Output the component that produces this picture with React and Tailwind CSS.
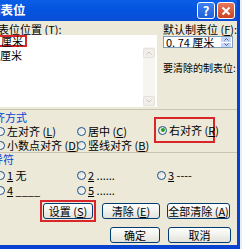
import React from "react";

const U = ({ c }) => <span className="underline">{c}</span>;

const Radio = ({ on }) => (
  <span className="shrink-0 w-[9px] h-[9px] rounded-full border border-[#1C5180] bg-gradient-to-br from-[#DCDCD7] to-white flex items-center justify-center">
    {on && <span className="w-[4px] h-[4px] rounded-full bg-[#21A121]" />}
  </span>
);

const Btn = ({ children, w, className = "" }) => (
  <div
    className={`h-[16px] shrink-0 ${w} rounded-[3px] border border-[#003C74] bg-gradient-to-b from-white to-[#E3E3DB] flex items-center justify-center whitespace-nowrap ${className}`}
  >
    {children}
  </div>
);

const Opt = ({ w, ml = "", on, children }) => (
  <div className={`${w} ${ml} shrink-0 h-[12px] flex items-center gap-[2px] whitespace-nowrap`}>
    <Radio on={on} />
    <span>{children}</span>
  </div>
);

export default function App() {
  return (
    <div
      className="w-[242px] h-[249px] overflow-hidden flex bg-[#ECE9D8] text-black"
      style={{ fontFamily: '"Noto Sans CJK SC", "Noto Sans", sans-serif' }}
    >
      <div className="w-[237px] shrink-0 flex flex-col">
        {/* title bar */}
        <div className="h-[21px] shrink-0 bg-gradient-to-b from-[#0A5FE6] via-[#0353DF] to-[#0A4FD6] flex items-center">
          <span className="ml-[-12px] text-white font-bold text-[12.5px] leading-none whitespace-nowrap">制表位</span>
          <div className="ml-auto flex gap-[2px] mr-[2px]">
            <div className="w-[18px] h-[17px] rounded-[3px] border border-white bg-gradient-to-b from-[#3C81F3] to-[#1F5FD8] flex items-center justify-center text-white font-bold text-[13px] leading-none">?</div>
            <div className="w-[18px] h-[17px] rounded-[3px] border border-white bg-gradient-to-b from-[#E8785C] to-[#C9421F] flex items-center justify-center">
              <svg width="10" height="10" viewBox="0 0 10 10">
                <path d="M1.5 1.5 L8.5 8.5 M8.5 1.5 L1.5 8.5" stroke="white" strokeWidth="2" />
              </svg>
            </div>
          </div>
        </div>

        {/* body */}
        <div className="flex-1 flex flex-col text-[11px] leading-none">
          <div className="flex pt-[3px]">
            {/* left column */}
            <div className="w-[157px] shrink-0 flex flex-col">
              <div className="h-[11px] ml-[-13px] whitespace-nowrap">制表位位置 (<U c="T" />):</div>
              <div className="h-[12px] bg-white flex items-center">
                <div className="ml-[-3px] h-[12px] pl-[2px] pr-[2px] border-2 border-[#D8262B] flex items-center whitespace-nowrap">厘米</div>
              </div>
              <div className="h-[60px] bg-white flex">
                <div className="flex-1 pt-[3px]">厘米</div>
                <div className="w-[12px] mr-[2px] flex flex-col justify-between bg-[#F6F5EF] py-[1px]">
                  <div className="h-[10px] border border-[#E4E2DA] rounded-[2px] bg-[#F0EFEA] flex items-center justify-center">
                    <svg width="6" height="4" viewBox="0 0 6 4"><path d="M0.5 3.5 L3 1 L5.5 3.5" stroke="#C9C7BA" fill="none" /></svg>
                  </div>
                  <div className="h-[10px] border border-[#E4E2DA] rounded-[2px] bg-[#F0EFEA] flex items-center justify-center">
                    <svg width="6" height="4" viewBox="0 0 6 4"><path d="M0.5 0.5 L3 3 L5.5 0.5" stroke="#C9C7BA" fill="none" /></svg>
                  </div>
                </div>
              </div>
            </div>
            {/* right column */}
            <div className="ml-[6px] flex flex-col">
              <div className="h-[11px] whitespace-nowrap">默认制表位 (<U c="F" />):</div>
              <div className="mt-[1px] w-[70px] h-[12px] bg-white border border-[#7F9DB9] flex items-center">
                <span className="pl-[2px] flex-1 whitespace-nowrap">0. 74 厘米</span>
                <div className="w-[10px] h-[10px] flex flex-col gap-px mr-px">
                  <div className="flex-1 bg-[#C5D5FB] flex items-center justify-center">
                    <svg width="5" height="3" viewBox="0 0 5 3"><path d="M0.5 2.5 L2.5 0.5 L4.5 2.5" stroke="#4D6185" fill="none" /></svg>
                  </div>
                  <div className="flex-1 bg-[#C5D5FB] flex items-center justify-center">
                    <svg width="5" height="3" viewBox="0 0 5 3"><path d="M0.5 0.5 L2.5 2.5 L4.5 0.5" stroke="#4D6185" fill="none" /></svg>
                  </div>
                </div>
              </div>
              <div className="mt-[15px] text-[10px] whitespace-nowrap">要清除的制表位:</div>
            </div>
          </div>

          {/* alignment section */}
          <div className="mt-[2px] h-px bg-[#C8C5B3] shrink-0" />
          <div className="mt-[2px] flex">
            <div className="w-[157px] shrink-0 flex flex-col">
              <div className="h-[11px] ml-[-17px] text-[#0046D5] whitespace-nowrap">对齐方式</div>
              <div className="mt-[2px] flex">
                <Opt w="w-[81px]" ml="ml-[-4px]">左对齐 (<U c="L" />)</Opt>
                <Opt w="w-[76px]">居中 (<U c="C" />)</Opt>
              </div>
              <div className="mt-[2px] flex">
                <Opt w="w-[81px]" ml="ml-[-4px]">小数点对齐 (<U c="D" />)</Opt>
                <Opt w="w-[76px]">竖线对齐 (<U c="B" />)</Opt>
              </div>
            </div>
            <div className="mt-[5px] ml-[-3px] h-[26px] w-[61px] shrink-0 border-2 border-[#D8262B] flex items-center pl-[2px] gap-[2px] whitespace-nowrap">
              <Radio on />
              <span>右对齐 (<U c="R" />)</span>
            </div>
          </div>

          {/* leader section */}
          <div className="mt-[1px] h-px bg-[#C8C5B3] shrink-0" />
          <div className="mt-[1px] h-[11px] ml-[-19px] text-[#0046D5] whitespace-nowrap">前导符</div>
          <div className="mt-[4px] flex">
            <Opt w="w-[81px]" ml="ml-[-4px]"><U c="1" /> 无</Opt>
            <Opt w="w-[80px]"><U c="2" /> ......</Opt>
            <Opt w="w-[60px]"><U c="3" /> ----</Opt>
          </div>
          <div className="mt-[3px] flex">
            <Opt w="w-[81px]" ml="ml-[-4px]"><U c="4" /> ____</Opt>
            <Opt w="w-[80px]"><U c="5" /> ......</Opt>
          </div>

          {/* buttons */}
          <div className="mt-[4px] flex items-center">
            <div className="ml-[40px] border-2 border-[#D8262B] p-px shrink-0">
              <Btn w="w-[50px]">设置 (<U c="S" />)</Btn>
            </div>
            <Btn w="w-[58px]" className="ml-[6px]">清除 (<U c="E" />)</Btn>
            <Btn w="w-[63px]" className="ml-[7px]">全部清除 (<U c="A" />)</Btn>
          </div>
          <div className="mt-[5px] flex items-center">
            <Btn w="w-[50px]" className="ml-[110px]">确定</Btn>
            <Btn w="w-[63px]" className="ml-[8px]">取消</Btn>
          </div>
        </div>
        <div className="h-[4px] shrink-0 bg-[#0842D0]" />
      </div>
      <div className="w-[3px] shrink-0 bg-[#0842D0]" />
      <div className="w-[2px] shrink-0 bg-[#E8EEF8]" />
    </div>
  );
}
